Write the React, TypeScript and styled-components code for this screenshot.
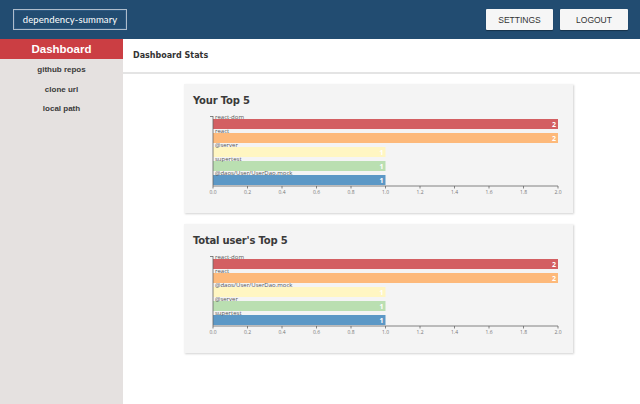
import styled, { createGlobalStyle } from "styled-components";

const GlobalStyle = createGlobalStyle`
    html, body {
        margin: 0;
        padding: 0;
        height: 100%;
        background: #ffffff;
    }
    #root {
        height: 100%;
    }
`;

type Dep = { name: string; count: number };

const _colors = ["#d35f62", "#fdb97a", "#fff6c2", "#badfb1", "#5c98c6"];
const _ticks = [0, 0.2, 0.4, 0.6, 0.8, 1.0, 1.2, 1.4, 1.6, 1.8, 2.0];

const _yourTop: Dep[] = [
    { name: "react-dom", count: 2 },
    { name: "react", count: 2 },
    { name: "@server", count: 1 },
    { name: "supertest", count: 1 },
    { name: "@daos/User/UserDao.mock", count: 1 },
];

const _totalTop: Dep[] = [
    { name: "react-dom", count: 2 },
    { name: "react", count: 2 },
    { name: "@daos/User/UserDao.mock", count: 1 },
    { name: "@server", count: 1 },
    { name: "supertest", count: 1 },
];

const Page = styled.div`
    display: flex;
    flex-direction: column;
    height: 100vh;
    font-family: "Liberation Sans", Arial, sans-serif;
`;

const TopBar = styled.header`
    display: flex;
    align-items: center;
    justify-content: space-between;
    height: 39px;
    padding: 0 12px 0 13px;
    background: #224c71;
    box-sizing: border-box;
    flex-shrink: 0;
`;

const Logo = styled.div`
    height: 21px;
    width: 114px;
    box-sizing: border-box;
    border: 1px solid #aebccb;
    box-shadow: inset 0 0 0 1px #2d5880;
    display: flex;
    align-items: center;
    justify-content: center;
    color: #ffffff;
    font-family: "Lato", sans-serif;
    font-size: 9.5px;
    letter-spacing: 0.1px;
    white-space: nowrap;
`;

const Actions = styled.div`
    display: flex;
    gap: 7px;
`;

const TopButton = styled.button<{ $w: number }>`
    width: ${(p) => p.$w}px;
    height: 21px;
    border: none;
    border-radius: 1px;
    background: #f6f6f6;
    color: #333333;
    font-family: "Liberation Sans", Arial, sans-serif;
    font-size: 8.5px;
    box-shadow: 0 1px 1px rgba(0, 0, 0, 0.35);
    padding: 0;
`;

const Body = styled.div`
    flex: 1;
    display: flex;
    min-height: 0;
`;

const SideBar = styled.nav`
    width: 123px;
    flex-shrink: 0;
    background: #e5e1e0;
    display: flex;
    flex-direction: column;
`;

const SideHead = styled.div`
    height: 20px;
    background: #cb3e43;
    color: #ffffff;
    font-family: "Liberation Sans", Arial, sans-serif;
    font-weight: bold;
    font-size: 11.5px;
    display: flex;
    align-items: center;
    justify-content: center;
`;

const SideList = styled.div`
    padding-top: 1px;
    display: flex;
    flex-direction: column;
`;

const SideItem = styled.div`
    height: 19.5px;
    display: flex;
    align-items: center;
    justify-content: center;
    font-size: 8px;
    font-weight: bold;
    color: #3a3a3a;
`;

const Main = styled.main`
    flex: 1;
    display: flex;
    flex-direction: column;
    min-width: 0;
`;

const MainHead = styled.div`
    height: 33px;
    border-bottom: 2px solid #e4e4e4;
    display: flex;
    align-items: center;
    padding-left: 10px;
    font-family: "DejaVu Sans", sans-serif;
    font-size: 8px;
    font-weight: bold;
    color: #333333;
`;

const Cards = styled.div`
    display: flex;
    flex-direction: column;
    align-items: center;
    gap: 11px;
    padding: 10px 6px 0 0;
`;

const Card = styled.section`
    width: 389px;
    height: 129px;
    background: #f4f4f4;
    box-shadow: 1px 1px 2px rgba(0, 0, 0, 0.18);
    display: flex;
    flex-direction: column;
`;

const CardTitle = styled.h2`
    margin: 0;
    padding: 11px 0 0 9px;
    height: 19px;
    font-family: "DejaVu Sans", sans-serif;
    font-size: 10px;
    font-weight: 600;
    color: #3a3a3a;
    letter-spacing: -0.2px;
`;

const ChartSvg = styled.svg`
    display: block;
    font-family: "Open Sans", "DejaVu Sans", sans-serif;
`;

const X0 = 29;
const UNIT = 172.5;
const AXIS_Y = 72;

const BarChart = (props: { data: Dep[] }) => {
    return (
        <ChartSvg width={389} height={99}>
            {props.data.map((d, i) => {
                const top = 5 + 14 * i;
                const w = d.count * UNIT;
                return (
                    <g key={d.name + i}>
                        <rect x={X0} y={top} width={w} height={10} fill={_colors[i]} />
                        <text x={X0 + 2} y={top - 0.5} fontSize={6} fill="#555">
                            {d.name}
                        </text>
                        <text x={X0 + w - 2} y={top + 7.8} fontSize={7} fontWeight="bold" fill="#fff" textAnchor="end">
                            {d.count}
                        </text>
                    </g>
                );
            })}
            <line x1={X0} y1={2} x2={X0} y2={AXIS_Y} stroke="#666" strokeWidth={0.8} />
            <line x1={X0 - 3} y1={2.5} x2={X0} y2={2.5} stroke="#666" strokeWidth={0.8} />
            <line x1={X0} y1={AXIS_Y} x2={X0 + 2 * UNIT} y2={AXIS_Y} stroke="#666" strokeWidth={0.8} />
            {_ticks.map((t) => (
                <g key={t}>
                    <line x1={X0 + t * UNIT} y1={AXIS_Y} x2={X0 + t * UNIT} y2={AXIS_Y + 2.5} stroke="#666" strokeWidth={0.8} />
                    <text x={X0 + t * UNIT} y={AXIS_Y + 8} fontSize={5} fill="#777" textAnchor="middle">
                        {t.toFixed(1)}
                    </text>
                </g>
            ))}
        </ChartSvg>
    );
};

export default function App() {
    return (
        <Page>
            <GlobalStyle />
            <TopBar>
                <Logo>dependency-summary</Logo>
                <Actions>
                    <TopButton $w={67}>SETTINGS</TopButton>
                    <TopButton $w={68}>LOGOUT</TopButton>
                </Actions>
            </TopBar>
            <Body>
                <SideBar>
                    <SideHead>Dashboard</SideHead>
                    <SideList>
                        <SideItem>github repos</SideItem>
                        <SideItem>clone url</SideItem>
                        <SideItem>local path</SideItem>
                    </SideList>
                </SideBar>
                <Main>
                    <MainHead>Dashboard Stats</MainHead>
                    <Cards>
                        <Card>
                            <CardTitle>Your Top 5</CardTitle>
                            <BarChart data={_yourTop} />
                        </Card>
                        <Card>
                            <CardTitle>Total user's Top 5</CardTitle>
                            <BarChart data={_totalTop} />
                        </Card>
                    </Cards>
                </Main>
            </Body>
        </Page>
    );
}
